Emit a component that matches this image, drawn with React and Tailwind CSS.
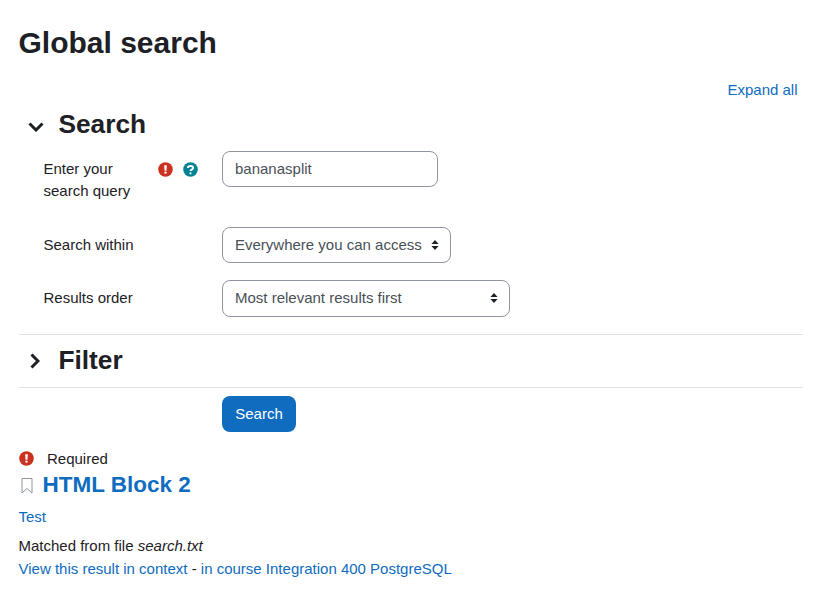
function AlertIcon({ className }) {
	return (
		<svg viewBox="0 0 512 512" className={className}>
			<circle cx="256" cy="256" r="248" fill="#ca3120" />
			<path fill="#fff" d="M212 110h88l-12 190h-64z" />
			<circle cx="256" cy="362" r="42" fill="#fff" />
		</svg>
	);
}

function HelpIcon({ className }) {
	return (
		<svg viewBox="0 0 512 512" className={className}>
			<circle cx="256" cy="256" r="248" fill="#008196" />
			<path fill="none" stroke="#fff" strokeWidth="66" d="M165 205c4-44 42-68 92-68 48 0 88 24 88 66 0 56-88 54-88 108" />
			<circle cx="256" cy="388" r="38" fill="#fff" />
		</svg>
	);
}

function SortArrows() {
	return (
		<svg viewBox="0 0 8 10" className="w-[8px] h-[10px] mr-[1.5px] shrink-0">
			<path fill="#1d2125" d="M4 0l3.6 4H.4zM4 10L.4 6h7.2z" />
		</svg>
	);
}

function Select({ value, className }) {
	return (
		<div className={"flex items-center justify-between pl-[12px] pr-[10px] border border-[#8f959e] rounded-lg bg-white text-[#495057] " + className}>
			<span>{value}</span>
			<SortArrows />
		</div>
	);
}

function SectionHeader({ title, open }) {
	return (
		<div className="flex items-center h-[36px]">
			<div className="w-[39.5px] flex">
				{open ? (
					<svg viewBox="0 0 16 10" className="ml-[8.5px] mt-[5px] w-[16px] h-[10px]">
						<path fill="none" stroke="#1d2125" strokeWidth="3" d="M1.5 1.5L8 8l6.5-6.5" />
					</svg>
				) : (
					<svg viewBox="0 0 10 16" className="ml-[11px] w-[10px] h-[16px]">
						<path fill="none" stroke="#1d2125" strokeWidth="3" d="M1.5 1.5L8 8l-6.5 6.5" />
					</svg>
				)}
			</div>
			<h3 className="text-[26.25px] font-bold text-[#1d2125]">{title}</h3>
		</div>
	);
}

export default function App() {
	return (
		<div className="min-h-[615px] bg-white pl-[19px] pr-[20px] text-[15px] leading-[22.5px] text-[#1d2125] font-['Liberation_Sans',Arial,sans-serif]">
			<h2 className="pt-[25px] -ml-[0.5px] text-[30px] leading-[36px] font-bold">Global search</h2>

			<div className="flex justify-end pt-[18px] pr-[5.5px] text-[#0f6cbf]">
				<a>Expand all</a>
			</div>

			<div className="mt-[5px]">
				<SectionHeader title="Search" open />
			</div>

			<div className="mt-[8px] grid grid-cols-[203px_1fr] items-start">
				<div className="pl-[24.5px] flex">
					<div className="w-[114.5px] pt-[7px]">Enter your search query</div>
					<div className="flex gap-[10px] pt-[11px]">
						<AlertIcon className="w-[15px] h-[15px]" />
						<HelpIcon className="w-[15px] h-[15px]" />
					</div>
				</div>
				<div className="w-[216px] h-[36px] flex items-center px-[12px] pt-[1px] border border-[#8f959e] rounded-lg text-[#495057]">
					bananasplit
				</div>
			</div>

			<div className="mt-[24px] grid grid-cols-[203px_1fr] items-center">
				<div className="pl-[24.5px] pt-[2px]">Search within</div>
				<Select value="Everywhere you can access" className="w-[229px] h-[36px] pt-[1px]" />
			</div>

			<div className="mt-[17px] grid grid-cols-[203px_1fr] items-center">
				<div className="pl-[24.5px]">Results order</div>
				<Select value="Most relevant results first" className="w-[288px] h-[37px]" />
			</div>

			<div className="mt-[17px] border-t border-[#dee2e6] pt-[8px] pb-[8px]">
				<SectionHeader title="Filter" />
			</div>

			<div className="border-t border-[#dee2e6] pt-[8px] pl-[203px]">
				<div className="w-[74px] h-[36px] flex items-center justify-center pt-[1px] rounded-lg bg-[#0f6cbf] text-white">
					Search
				</div>
			</div>

			<div className="mt-[16px] flex items-center gap-[13px]">
				<AlertIcon className="w-[15px] h-[15px]" />
				<span>Required</span>
			</div>

			<div className="mt-[1px] flex items-center">
				<svg viewBox="0 0 12 16" className="w-[12px] h-[16px] ml-[2px] mt-[2px]">
					<path fill="none" stroke="#8f959e" d="M1 .5h10v14.5L6 10.5 1 15z" />
				</svg>
				<h3 className="ml-[9.5px] text-[22.5px] leading-[27px] font-bold text-[#0f6cbf]">HTML Block 2</h3>
			</div>

			<div className="mt-[8px] -ml-[0.5px] text-[#0f6cbf]">Test</div>

			<div className="mt-[6px] -ml-[0.5px]">
				Matched from file <em>search.txt</em>
			</div>
			<div className="mt-[1px] -ml-[0.5px]">
				<a className="text-[#0f6cbf]">View this result in context</a>
				{' - '}
				<a className="text-[#0f6cbf]">in course Integration 400 PostgreSQL</a>
			</div>
		</div>
	);
}
